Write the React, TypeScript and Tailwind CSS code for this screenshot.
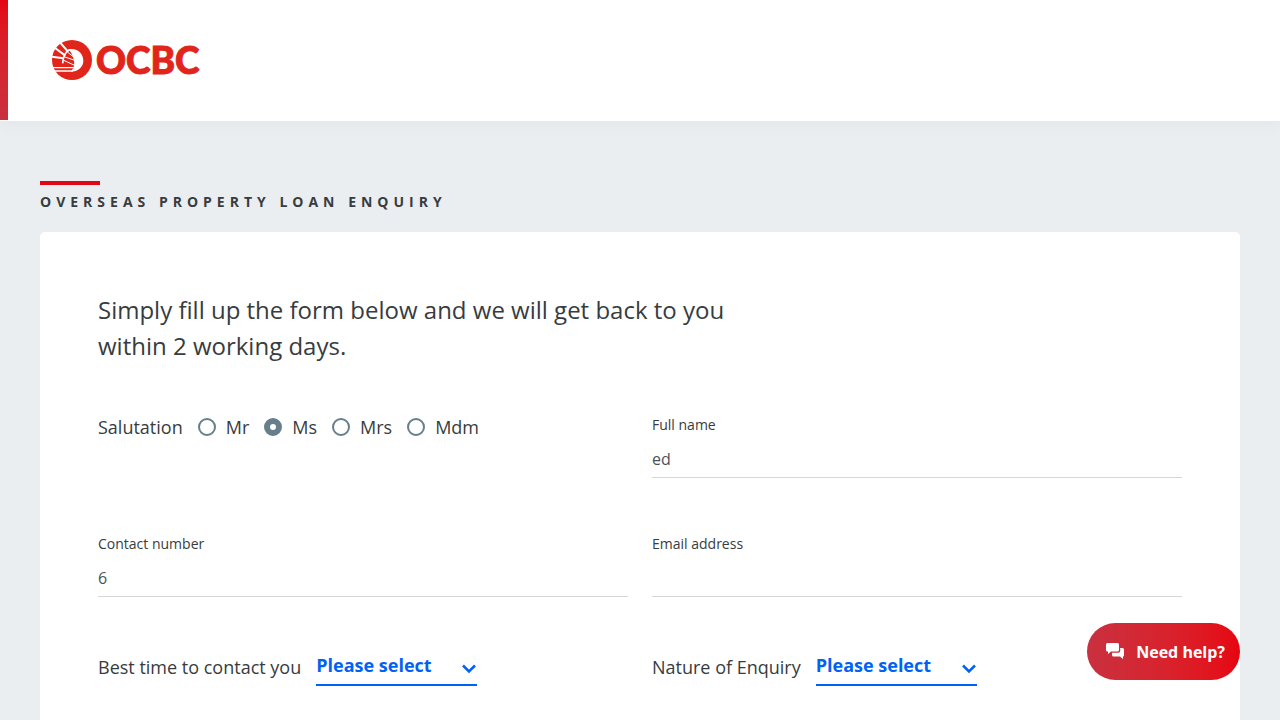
import { ReactNode, useState } from 'react'

function Logo() {
  return (
    <a href="#home" aria-label="OCBC" className="flex items-center gap-1 text-[#e1251b]">
      <svg viewBox="0 0 120 120" className="h-10 w-10" aria-hidden="true">
        <circle cx="60" cy="60" r="60" fill="currentColor" />
        <path d="M48 28C76 22 94 41 94 62C94 80 80 95 55 95C65 88 68 77 66 64C64 48 58 36 48 28Z" fill="#fff" />
        <g stroke="#fff" fill="none">
          <path d="M24 7L48 35M9 24L40 47M-2 50L34 55" strokeWidth="6" />
          <path d="M52 30Q34 38 32 70" strokeWidth="5" />
          <path d="M36 50L66 60M35 61L68 76M46 36L64 50" strokeWidth="3" />
          <path d="M0 83H66M6 93H62" strokeWidth="4" />
        </g>
      </svg>
      <span className="font-['Lato',sans-serif] text-[37px] leading-10 font-black [-webkit-text-stroke:1px_#e1251b]">OCBC</span>
    </a>
  )
}

function TextField({ id, label, type = 'text', initial = '' }: { id: string; label: string; type?: string; initial?: string }) {
  const [value, setValue] = useState(initial)
  return (
    <div>
      <label htmlFor={id} className="block text-sm leading-5">{label}</label>
      <input
        id={id}
        type={type}
        value={value}
        onChange={(e) => setValue(e.target.value)}
        className="mt-2 block h-[35px] w-full border-b border-[#d5d7d8] bg-transparent pb-[3px] text-base text-[#4b5157] outline-none"
      />
    </div>
  )
}

function SelectField({ id, label, children }: { id: string; label: string; children: ReactNode }) {
  return (
    <div className="flex items-start gap-[15px]">
      <label htmlFor={id} className="text-lg leading-7">{label}</label>
      <div className="relative">
        <select
          id={id}
          className="block h-[33px] w-[161px] appearance-none border-b-2 border-[#0062f5] bg-transparent pb-[7px] text-lg leading-6 font-bold text-[#0062f5] outline-none"
        >
          <option>Please select</option>
          {children}
        </select>
        <svg viewBox="0 0 16 10" className="pointer-events-none absolute right-0 bottom-3 h-[10px] w-4" fill="none" stroke="#0062f5" strokeWidth="2.5" aria-hidden="true">
          <path d="M2 1.5L8 7.5L14 1.5" />
        </svg>
      </div>
    </div>
  )
}

function Salutation() {
  const [selected, setSelected] = useState('Ms')
  return (
    <div role="radiogroup" aria-labelledby="salutation-label" className="flex items-center gap-[15px] self-start text-lg leading-6">
      <span id="salutation-label">Salutation</span>
      {['Mr', 'Ms', 'Mrs', 'Mdm'].map((name) => (
        <label key={name} className="flex items-center gap-[10px]">
          <input
            type="radio"
            name="salutation"
            checked={selected === name}
            onChange={() => setSelected(name)}
            className="h-[18px] w-[18px] appearance-none rounded-full border-2 border-[#677e8b] bg-white checked:border-[6px]"
          />
          {name}
        </label>
      ))}
    </div>
  )
}

export default function App() {
  return (
    <div className="flex min-h-screen flex-col bg-[#eaeef1] font-['Open_Sans',sans-serif] text-[#373c40] antialiased">
      <header className="relative flex bg-white pb-px shadow-[0_2px_16px_rgba(60,80,95,0.05)]">
        <div className="w-2 bg-linear-to-b from-[#e30613] to-[#c9303f]" />
        <div className="px-11 py-10">
          <Logo />
        </div>
      </header>

      <main className="flex flex-1 flex-col px-10 pt-[60px]">
        <div className="h-1 w-[60px] bg-[#e30613]" />
        <h1 className="mt-[7px] text-sm leading-5 font-bold tracking-[5px] uppercase">Overseas property loan enquiry</h1>
        <form className="mt-5 flex-1 rounded-t-[5px] bg-white px-[58px] pt-[60px] pb-6" onSubmit={(e) => e.preventDefault()}>
          <p className="max-w-[660px] text-2xl leading-9">
            Simply fill up the form below and we will get back to you within 2 working days.
          </p>
          <div className="mt-[51px] grid grid-cols-2 gap-x-6 gap-y-14">
            <Salutation />
            <TextField id="full-name" label="Full name" initial="ed" />
            <TextField id="contact" label="Contact number" type="tel" initial="6" />
            <TextField id="email" label="Email address" type="email" />
            <SelectField id="best-time" label="Best time to contact you">
              <option>Morning</option>
              <option>Afternoon</option>
              <option>Evening</option>
            </SelectField>
            <SelectField id="nature" label="Nature of Enquiry">
              <option>New loan</option>
              <option>Refinancing</option>
            </SelectField>
          </div>
        </form>
      </main>

      <button type="button" className="fixed right-10 bottom-10 flex h-[57px] items-center gap-3 rounded-full bg-linear-to-r from-[#c9303f] to-[#e6040f] pr-[15px] pl-[19px] text-base font-bold text-white">
        <svg viewBox="0 0 18 16" className="-mt-0.5 h-4 w-[18px]" fill="currentColor" aria-hidden="true">
          <path d="M1.500 0H11.500Q13 0 13 1.500V7Q13 8.500 11.500 8.500H5L2 11V8.500H1.500Q0 8.500 0 7V1.500Q0 0 1.500 0Z" />
          <path d="M14.200 5H16.500Q18 5 18 6.500V12Q18 13.500 17 13.500V16L14 13.500H7.500Q6 13.500 6 12V9.700H12.500Q14.200 9.700 14.200 8Z" />
        </svg>
        Need help?
      </button>
    </div>
  )
}
